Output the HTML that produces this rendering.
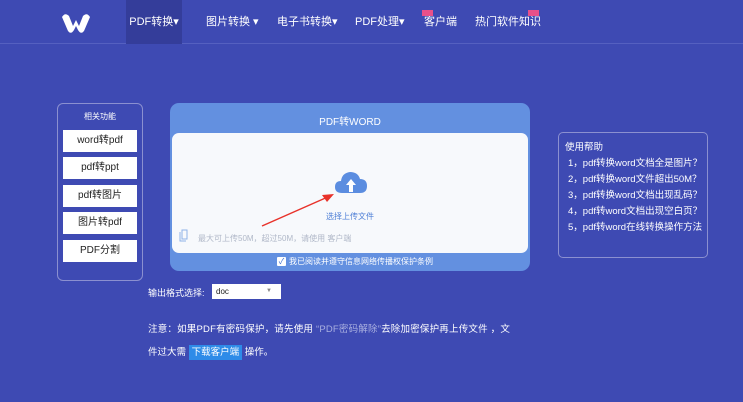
<!DOCTYPE html><html><head><meta charset="utf-8"><style>
*{margin:0;padding:0;box-sizing:border-box}
body{width:743px;height:402px;overflow:hidden;background:#3e4ab3;font-family:"Liberation Sans","Noto Sans CJK SC",sans-serif;position:relative;color:#fff}
.nav{position:absolute;left:0;top:0;width:743px;height:44px;border-bottom:1px solid #5560c0}
.nav a{position:absolute;top:0;height:44px;line-height:44px;font-size:11px;color:#fff}
.act{background:#343d9a}
.new{position:absolute;top:10px;width:11px;height:6px;background:#e8508a;font-size:4px;line-height:6px;text-align:center}
.abs{position:absolute}
.lp{left:57px;top:103px;width:86px;height:178px;border:1px solid #8b90d0;border-radius:6px}
.btn{position:absolute;left:63px;width:74px;height:22px;background:#fff;color:#222;font-size:10px;text-align:center;line-height:22px}
.card{left:170px;top:103px;width:360px;height:168px;background:#6390e0;border-radius:9px}
.in{left:172px;top:133px;width:356px;height:120px;background:#f7f9fc;border-radius:7px}
.rp{left:558px;top:132px;width:150px;height:126px;border:1px solid #8b90d0;border-radius:5px;font-size:9.5px;line-height:16px;padding:7px 0 0 6px}
</style></head><body>
<div class="nav">
<svg class="abs" style="left:60px;top:12px" width="32" height="22" viewBox="0 0 32 22"><path d="M2 5 Q5 0 9 4 L13 14 L16 8 L19 14 L23 4 Q27 0 30 5 L24 19 Q21 23 18 18 L16 14 L14 18 Q11 23 8 19 Z" fill="#fff"/></svg>
<a class="act" style="left:126px;width:56px;text-align:center">PDF转换▾</a>
<a style="left:206px">图片转换 ▾</a>
<a style="left:277px">电子书转换▾</a>
<a style="left:355px">PDF处理▾</a>
<a style="left:424px">客户端</a><div class="new" style="left:422px"></div>
<a style="left:475px">热门软件知识</a><div class="new" style="left:528px"></div>
</div>
<div class="abs lp"></div>
<div class="abs" style="left:57px;top:111px;width:86px;text-align:center;font-size:8px">相关功能</div>
<div class="btn" style="top:130px">word转pdf</div>
<div class="btn" style="top:157px">pdf转ppt</div>
<div class="btn" style="top:185px">pdf转图片</div>
<div class="btn" style="top:212px">图片转pdf</div>
<div class="btn" style="top:240px">PDF分割</div>
<div class="abs card"></div>
<div class="abs" style="left:170px;top:113px;width:360px;text-align:center;font-size:10px">PDF转WORD</div>
<div class="abs in"></div>
<svg class="abs" style="left:334px;top:170px" width="34" height="24" viewBox="0 0 34 24"><path d="M8 23 Q1 23 1 17 Q1 11 7 11 Q8 3 16 2 Q24 2 26 9 Q33 9 33 16 Q33 23 26 23 Z" fill="#5b8de0"/><path d="M17 9 L12 15 H15 V22 H19 V15 H22 Z" fill="#fff"/></svg>
<svg class="abs" style="left:260px;top:190px" width="80" height="40"><line x1="2" y1="36" x2="70" y2="6" stroke="#e8322a" stroke-width="1.5"/><path d="M74 4 L62 5 L67 12 Z" fill="#e8322a"/></svg>
<div class="abs" style="left:326px;top:211px;font-size:8px;color:#4e7fd6">选择上传文件</div>
<svg class="abs" style="left:179px;top:229px" width="10" height="13"><path d="M3 1 H8 V10 H3 Z M1 3 V12 H7" fill="none" stroke="#8fb2e8"/></svg>
<div class="abs" style="left:198px;top:233px;font-size:8px;color:#b0b8c8">最大可上传50M，超过50M，请使用 客户端</div>
<div class="abs" style="left:277px;top:257px;width:9px;height:9px;background:#fff;border-radius:1px;color:#3e6ed0;font-size:8px;line-height:9px;text-align:center">✓</div>
<div class="abs" style="left:289px;top:256px;font-size:8px">我已阅读并遵守信息网络传播权保护条例</div>
<div class="abs" style="left:148px;top:286px;font-size:9px">输出格式选择:</div>
<div class="abs" style="left:212px;top:284px;width:69px;height:15px;background:#fff;color:#222;font-size:8px;line-height:15px;padding-left:4px">doc<span style="position:absolute;right:9px;color:#888;font-size:6px">▼</span></div>
<div class="abs" style="left:148px;top:321px;font-size:9.5px;letter-spacing:0.2px">注意：如果PDF有密码保护，请先使用 <span style="color:#aab0e0">“PDF密码解除”</span>去除加密保护再上传文件 ，文</div>
<div class="abs" style="left:148px;top:345px;font-size:9.5px;line-height:15px">件过大需 <span style="display:inline-block;background:#2e8be8;padding:0 3px">下载客户端</span> 操作。</div>
<div class="abs rp"><div>使用帮助</div>
<div style="padding-left:3px">1，pdf转换word文档全是图片？<br>2，pdf转换word文件超出50M？<br>3，pdf转换word文档出现乱码？<br>4，pdf转word文档出现空白页？<br>5，pdf转word在线转换操作方法</div></div>
</body></html>
